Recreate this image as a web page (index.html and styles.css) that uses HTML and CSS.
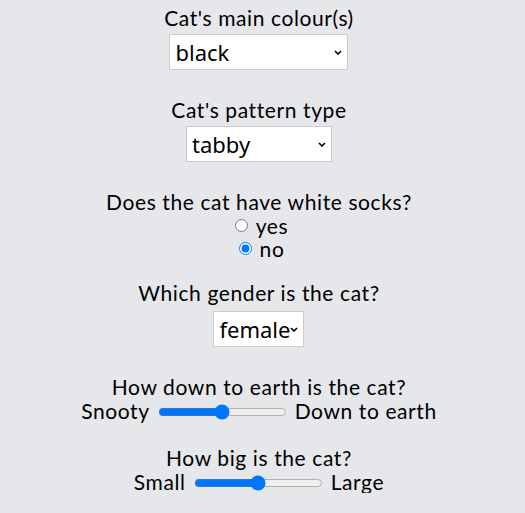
FILE: index.html
```html
<!DOCTYPE html>
<html lang="en">
<head>
<meta charset="utf-8">
<title>Cat form</title>
<link rel="stylesheet" href="styles.css">
</head>
<body>
<form class="form">
  <div class="field">
    <label class="label" for="colour">Cat's main colour(s)</label>
    <select id="colour" class="select select-colour">
      <option>black</option>
      <option>white</option>
      <option>ginger</option>
    </select>
  </div>
  <div class="field">
    <label class="label" for="pattern">Cat's pattern type</label>
    <select id="pattern" class="select select-pattern">
      <option>tabby</option>
      <option>solid</option>
    </select>
  </div>
  <div class="field field-radio">
    <span class="label">Does the cat have white socks?</span>
    <label class="radio"><input type="radio" name="socks"> yes</label>
    <label class="radio"><input type="radio" name="socks" checked> no</label>
  </div>
  <div class="field field-gender">
    <label class="label" for="gender">Which gender is the cat?</label>
    <select id="gender" class="select select-gender">
      <option>female</option>
      <option>male</option>
    </select>
  </div>
  <div class="field field-range">
    <label class="label" for="earth">How down to earth is the cat?</label>
    <div class="range-row">Snooty <input id="earth" type="range" class="range"> Down to earth</div>
  </div>
  <div class="field field-range field-last">
    <label class="label" for="size">How big is the cat?</label>
    <div class="range-row">Small <input id="size" type="range" class="range"> Large</div>
  </div>
</form>
</body>
</html>
```

FILE: styles.css
```css
html, body {
  margin: 0;
  padding: 0;
  background: #e5e7eb;
}
body {
  font-family: Lato, "Liberation Sans", sans-serif;
  font-size: 21px;
  letter-spacing: 0.6px;
  color: #000;
  padding-top: 6px;
}
.form {
  display: flex;
  flex-direction: column;
  align-items: center;
  padding-right: 7px;
}
.field {
  display: flex;
  flex-direction: column;
  align-items: center;
  margin-bottom: 28px;
}
.field-radio {
  margin-bottom: 21px;
}
.field-range {
  margin-bottom: 24px;
}
.label {
  display: block;
  line-height: 24px;
  margin-bottom: 4px;
}
.field-gender .label {
  margin-bottom: 6px;
}
.field-radio .label,
.field-range .label {
  margin-bottom: 0;
}
.select {
  -webkit-appearance: none;
  appearance: none;
  font-family: "Noto Sans", "Open Sans", sans-serif;
  font-size: 22px;
  letter-spacing: 0;
  height: 36px;
  background: #fff url("data:image/svg+xml,%3Csvg xmlns='http://www.w3.org/2000/svg' width='8' height='5' viewBox='0 0 8 5'%3E%3Cpath d='M1 1l3 3 3-3' fill='none' stroke='%23000' stroke-width='1.6'/%3E%3C/svg%3E") no-repeat right 5px center;
  color: #000;
  border: 1px solid #ccc;
  border-radius: 0;
  padding: 0 14px 0 5px;
  box-sizing: border-box;
}
.select-colour { width: 179px; }
.select-pattern { width: 146px; }
.select-gender { width: 91px; padding-right: 12px; }
.radio {
  line-height: 23px;
  display: flex;
  align-items: center;
  gap: 4px;
}
.radio input {
  margin: 0 4px 0 5px;
}
.range-row {
  display: flex;
  align-items: center;
  line-height: 23px;
  gap: 4px;
}
.range {
  margin: 2px 4px 0;
}
.field-last {
  margin-bottom: 0;
}
```
